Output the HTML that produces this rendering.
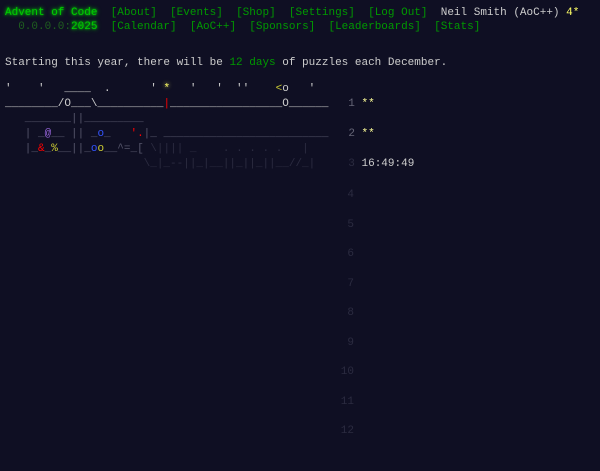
<!DOCTYPE html>
<html><head><meta charset="utf-8"><style>
html,body{margin:0;padding:0;background:#0f0f23;width:600px;height:471px;overflow:hidden}
body{font-family:"Liberation Mono",monospace;font-size:11px;color:#cccccc;line-height:14.7px}
.h{position:absolute;left:5px;white-space:pre}
.t{color:#00cc00;text-shadow:0 0 2px #00cc00,0 0 5px #00cc00}
.l{color:#009900}
.d{color:#1f5f1f}
pre{margin:0;font:inherit;position:absolute;left:5px;top:82px;line-height:15px}
.g{color:#55556a}.dd{color:#2b2b40}.w{color:#cccccc}
.y{color:#ffff66;text-shadow:0 0 4px #ffff66}.r{color:#ff0000}.b{color:#3355ff}.p{color:#9966dd}.o{color:#cccc33}
.n{color:#666677}.s{color:#ffff99}
</style></head><body>
<div class="h" style="top:6px"><span class="t">Advent of Code</span>  <span class="l">[About]</span>  <span class="l">[Events]</span>  <span class="l">[Shop]</span>  <span class="l">[Settings]</span>  <span class="l">[Log Out]</span>  Neil Smith (AoC++) <span style="color:#ffff66">4*</span></div>
<div class="h" style="top:20px">  <span class="d">0.0.0.0:</span><span class="t">2025</span>  <span class="l">[Calendar]</span>  <span class="l">[AoC++]</span>  <span class="l">[Sponsors]</span>  <span class="l">[Leaderboards]</span>  <span class="l">[Stats]</span></div>
<div class="h" style="top:56px">Starting this year, there will be <span class="l">12 days</span> of puzzles each December.</div>
<pre><span class="w">'    '   ____  .      ' <span class="y">*</span>   '   '  ''    <span class="o">&lt;</span>o   '</span>
<span class="w">________/O___\__________<span class="r">|</span>_________________O______</span>   <span class="n">1</span> <span class="s">**</span>
<span class="g">   _______||_________</span>
<span class="g">   | _<span class="p">@</span>__ || _<span class="b">o</span>_   <span class="r">'</span><span class="r">.</span>|_ _________________________</span>   <span class="n">2</span> <span class="s">**</span>
<span class="g">   |_<span class="r">&amp;</span>_<span class="o">%</span>__||_<span class="b">o</span><span class="o">o</span>__^=_[</span><span class="dd"> \|||| _    . . . . .   |</span>
<span class="dd">                     \_|_--||_|__||_||_||__//_|</span>     <span class="dd">3</span> 16:49:49
</pre>
<div style="position:absolute;left:340px;top:181px;width:14px;text-align:right;color:#2b2b40;line-height:29.5px">4<br>5<br>6<br>7<br>8<br>9<br>10<br>11<br>12</div>
</body></html>
